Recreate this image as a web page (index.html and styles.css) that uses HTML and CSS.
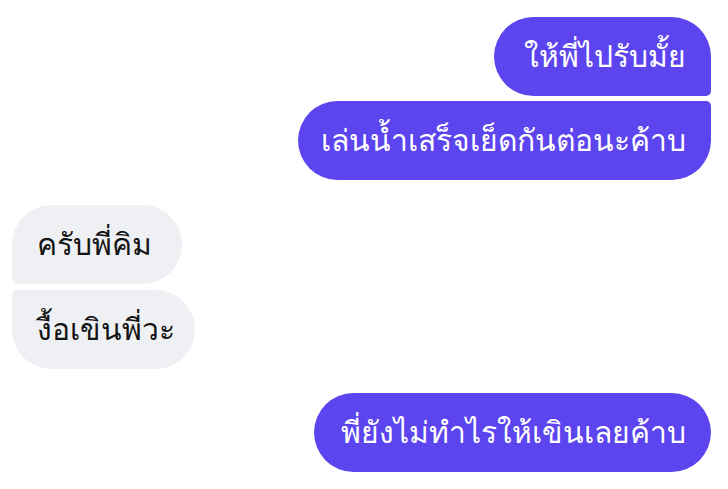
FILE: index.html
```html
<!DOCTYPE html>
<html lang="th">
<head>
<meta charset="utf-8">
<link rel="stylesheet" href="styles.css">
</head>
<body>
<div class="chat">
  <div class="group out">
    <div class="bubble out first">ให้พี่ไปรับมั้ย</div>
    <div class="bubble out last">เล่นน้ำเสร็จเย็ดกันต่อนะค้าบ</div>
  </div>
  <div class="group in">
    <div class="bubble in first">ครับพี่คิม</div>
    <div class="bubble in last">งื้อเขินพี่วะ</div>
  </div>
  <div class="group out last-group">
    <div class="bubble out single">พี่ยังไม่ทำไรให้เขินเลยค้าบ</div>
  </div>
</div>
</body>
</html>
```
FILE: styles.css
```css
html, body {
  margin: 0;
  padding: 0;
  background: #ffffff;
}
.chat {
  display: flex;
  flex-direction: column;
  gap: 25px;
  padding: 17px 17px 0 12px;
  font-family: "DejaVu Sans", "Noto Sans", sans-serif;
}
.group {
  display: flex;
  flex-direction: column;
  gap: 5px;
}
.group.in { gap: 6px; }
.group.last-group { margin-top: -1px; }
.group.out { align-items: flex-end; }
.group.in { align-items: flex-start; }
.bubble {
  height: 79px;
  box-sizing: border-box;
  display: flex;
  align-items: center;
  padding: 0 25px 0 27px;
  font-size: 30px;
  border-radius: 40px;
}
.bubble.out {
  background: #5c45ef;
  color: #ffffff;
}
.bubble.out.first { padding-left: 30px; }
.bubble.out.last { padding-left: 23px; }
.bubble.in {
  background: #eef0f3;
  color: #141414;
  padding: 0 20px 0 25px;
}
.bubble.out.first { border-bottom-right-radius: 5px; }
.bubble.out.last { border-top-right-radius: 5px; }
.bubble.in.first { border-bottom-left-radius: 5px; padding-right: 30px; }
.bubble.in.last { border-top-left-radius: 5px; }
```
